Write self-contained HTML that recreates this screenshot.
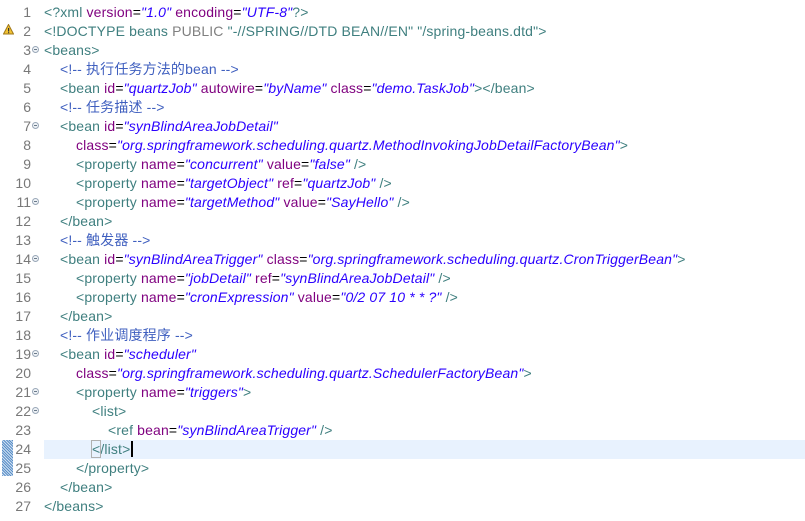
<!DOCTYPE html>
<html><head><meta charset="utf-8"><style>
html,body{margin:0;padding:0;background:#fff;width:805px;height:521px;overflow:hidden}
body{font-family:"Liberation Sans","Noto Sans CJK SC",sans-serif;font-size:14px;letter-spacing:0.15px;position:relative}
.r{position:absolute;left:0;width:805px;height:19px;line-height:19px;white-space:pre}
.n{position:absolute;left:0;width:31px;text-align:right;color:#787878;font-size:14px;letter-spacing:0}
.c{position:absolute;left:44px}
.f{position:absolute;left:32px;top:5px;width:7px;height:7px;border:1px solid #9aa8b8;border-radius:50%;box-sizing:border-box;background:#eef2f6}
.f:after{content:"";position:absolute;left:1px;top:2px;width:3px;height:1px;background:#6a7a8a}
.t{color:#3f7f7f}.a{color:#7f007f}.v{color:#2a00ff;font-style:italic}.m{color:#3f5fbf}.k{color:#000}
.hl{position:absolute;left:44px;top:440px;width:761px;height:19px;background:#e8f2fe}
.mk{position:absolute;left:2px;width:11px;background:repeating-linear-gradient(45deg,#5b8fc7 0 1px,#cfe0f2 1px 2px)}
</style></head><body>
<div class="hl"></div>
<div class="mk" style="top:440px;height:36px"></div>
<svg style="position:absolute;left:3px;top:24px" width="11" height="11"><path d="M5.5 0.5 L10.5 10 L0.5 10 Z" fill="#f1c232" stroke="#a0781a" stroke-width="1"/><rect x="5" y="4" width="1.2" height="3.5" fill="#333"/><rect x="5" y="8.2" width="1.2" height="1" fill="#333"/></svg>
<div class="r" style="top:3px"><span class="n">1</span><span class="c"><span class="t">&lt;?xml </span><span class="a">version</span>=<span class="v">"1.0"</span><span class="a"> encoding</span>=<span class="v">"UTF-8"</span><span class="t">?&gt;</span></span></div>
<div class="r" style="top:22px"><span class="n">2</span><span class="c"><span class="t">&lt;!DOCTYPE beans </span><span style="color:#808080">PUBLIC</span><span class="t"> "-//SPRING//DTD BEAN//EN" "/spring-beans.dtd"&gt;</span></span></div>
<div class="r" style="top:41px"><span class="n">3</span><i class="f"></i><span class="c"><span class="t">&lt;beans&gt;</span></span></div>
<div class="r" style="top:60px"><span class="n">4</span><span class="c" style="left:60px"><span class="m">&lt;!-- 执行任务方法的bean --&gt;</span></span></div>
<div class="r" style="top:79px"><span class="n">5</span><span class="c" style="left:60px"><span class="t">&lt;bean </span><span class="a">id</span>=<span class="v">"quartzJob"</span><span class="a"> autowire</span>=<span class="v">"byName"</span><span class="a"> class</span>=<span class="v">"demo.TaskJob"</span><span class="t">&gt;&lt;/bean&gt;</span></span></div>
<div class="r" style="top:98px"><span class="n">6</span><span class="c" style="left:60px"><span class="m">&lt;!-- 任务描述 --&gt;</span></span></div>
<div class="r" style="top:117px"><span class="n">7</span><i class="f"></i><span class="c" style="left:60px"><span class="t">&lt;bean </span><span class="a">id</span>=<span class="v">"synBlindAreaJobDetail"</span></span></div>
<div class="r" style="top:136px"><span class="n">8</span><span class="c" style="left:76px"><span class="a">class</span>=<span class="v">"org.springframework.scheduling.quartz.MethodInvokingJobDetailFactoryBean"</span><span class="t">&gt;</span></span></div>
<div class="r" style="top:155px"><span class="n">9</span><span class="c" style="left:76px"><span class="t">&lt;property </span><span class="a">name</span>=<span class="v">"concurrent"</span><span class="a"> value</span>=<span class="v">"false"</span><span class="t"> /&gt;</span></span></div>
<div class="r" style="top:174px"><span class="n">10</span><span class="c" style="left:76px"><span class="t">&lt;property </span><span class="a">name</span>=<span class="v">"targetObject"</span><span class="a"> ref</span>=<span class="v">"quartzJob"</span><span class="t"> /&gt;</span></span></div>
<div class="r" style="top:193px"><span class="n">11</span><i class="f"></i><span class="c" style="left:76px"><span class="t">&lt;property </span><span class="a">name</span>=<span class="v">"targetMethod"</span><span class="a"> value</span>=<span class="v">"SayHello"</span><span class="t"> /&gt;</span></span></div>
<div class="r" style="top:212px"><span class="n">12</span><span class="c" style="left:60px"><span class="t">&lt;/bean&gt;</span></span></div>
<div class="r" style="top:231px"><span class="n">13</span><span class="c" style="left:60px"><span class="m">&lt;!-- 触发器 --&gt;</span></span></div>
<div class="r" style="top:250px"><span class="n">14</span><i class="f"></i><span class="c" style="left:60px"><span class="t">&lt;bean </span><span class="a">id</span>=<span class="v">"synBlindAreaTrigger"</span><span class="a"> class</span>=<span class="v">"org.springframework.scheduling.quartz.CronTriggerBean"</span><span class="t">&gt;</span></span></div>
<div class="r" style="top:269px"><span class="n">15</span><span class="c" style="left:76px"><span class="t">&lt;property </span><span class="a">name</span>=<span class="v">"jobDetail"</span><span class="a"> ref</span>=<span class="v">"synBlindAreaJobDetail"</span><span class="t"> /&gt;</span></span></div>
<div class="r" style="top:288px"><span class="n">16</span><span class="c" style="left:76px"><span class="t">&lt;property </span><span class="a">name</span>=<span class="v">"cronExpression"</span><span class="a"> value</span>=<span class="v">"0/2 07 10 * * ?"</span><span class="t"> /&gt;</span></span></div>
<div class="r" style="top:307px"><span class="n">17</span><span class="c" style="left:60px"><span class="t">&lt;/bean&gt;</span></span></div>
<div class="r" style="top:326px"><span class="n">18</span><span class="c" style="left:60px"><span class="m">&lt;!-- 作业调度程序 --&gt;</span></span></div>
<div class="r" style="top:345px"><span class="n">19</span><i class="f"></i><span class="c" style="left:60px"><span class="t">&lt;bean </span><span class="a">id</span>=<span class="v">"scheduler"</span></span></div>
<div class="r" style="top:364px"><span class="n">20</span><span class="c" style="left:76px"><span class="a">class</span>=<span class="v">"org.springframework.scheduling.quartz.SchedulerFactoryBean"</span><span class="t">&gt;</span></span></div>
<div class="r" style="top:383px"><span class="n">21</span><i class="f"></i><span class="c" style="left:76px"><span class="t">&lt;property </span><span class="a">name</span>=<span class="v">"triggers"</span><span class="t">&gt;</span></span></div>
<div class="r" style="top:402px"><span class="n">22</span><i class="f"></i><span class="c" style="left:92px"><span class="t">&lt;list&gt;</span></span></div>
<div class="r" style="top:421px"><span class="n">23</span><span class="c" style="left:108px"><span class="t">&lt;ref </span><span class="a">bean</span>=<span class="v">"synBlindAreaTrigger"</span><span class="t"> /&gt;</span></span></div>
<div class="r" style="top:440px"><span class="n">24</span><span class="c" style="left:92px"><span class="t" style="outline:1px solid #b0b0b0">&lt;</span><span class="t">/list&gt;</span><span style="border-left:2px solid #000;margin-left:1px"></span></span></div>
<div class="r" style="top:459px"><span class="n">25</span><span class="c" style="left:76px"><span class="t">&lt;/property&gt;</span></span></div>
<div class="r" style="top:478px"><span class="n">26</span><span class="c" style="left:60px"><span class="t">&lt;/bean&gt;</span></span></div>
<div class="r" style="top:497px"><span class="n">27</span><span class="c"><span class="t">&lt;/beans&gt;</span></span></div>
</body></html>
